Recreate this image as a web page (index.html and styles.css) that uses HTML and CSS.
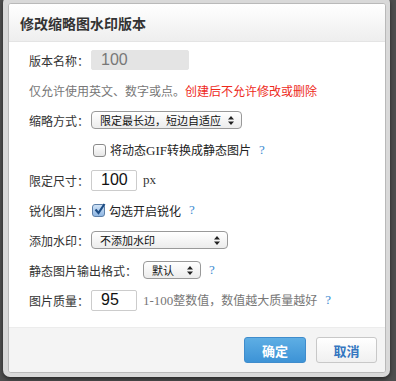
FILE: index.html
```html
<!DOCTYPE html>
<html lang="zh-CN">
<head>
	<meta charset="UTF-8">
	<title>修改缩略图水印版本</title>
	<link rel="stylesheet" href="styles.css">
</head>
<body>
	<div class="frame">
		<div class="modal">
			<div class="modal-header">修改缩略图水印版本</div>
			<div class="modal-body">
				<div class="row">
					<span class="label">版本名称：</span>
					<span class="input readonly">100</span>
				</div>
				<div class="row help">
					<span>仅允许使用英文、数字或点。</span><span class="warn">创建后不允许修改或删除</span>
				</div>
				<div class="row">
					<span class="label">缩略方式：</span>
					<span class="select w-method">限定最长边，短边自适应<svg class="arrows" width="6" height="9" viewBox="0 0 6 9"><path d="M3 0L6 3.5H0Z M3 9L0 5.5H6Z" fill="#222"/></svg></span>
				</div>
				<div class="row indent">
					<span class="check"></span>
					<span class="check-text">将动态<span class="latin">GIF</span>转换成静态图片</span>
					<span class="q">?</span>
				</div>
				<div class="row">
					<span class="label">限定尺寸：</span>
					<span class="input small">100</span>
					<span class="unit">px</span>
				</div>
				<div class="row">
					<span class="label">锐化图片：</span>
					<span class="check checked"><svg width="13" height="13" viewBox="0 0 13 13"><path d="M2.5 6.5L5.5 10L11.5 1" fill="none" stroke="#1d4d85" stroke-width="2.2"/></svg></span>
					<span class="check-text">勾选开启锐化</span>
					<span class="q">?</span>
				</div>
				<div class="row">
					<span class="label">添加水印：</span>
					<span class="select w-mark">不添加水印<svg class="arrows" width="6" height="9" viewBox="0 0 6 9"><path d="M3 0L6 3.5H0Z M3 9L0 5.5H6Z" fill="#222"/></svg></span>
				</div>
				<div class="row">
					<span class="label wide">静态图片输出格式：</span>
					<span class="select w-format">默认<svg class="arrows" width="6" height="9" viewBox="0 0 6 9"><path d="M3 0L6 3.5H0Z M3 9L0 5.5H6Z" fill="#222"/></svg></span>
					<span class="q">?</span>
				</div>
				<div class="row">
					<span class="label">图片质量：</span>
					<span class="input small">95</span>
					<span class="note"><span class="latin">1-100</span>整数值，数值越大质量越好</span>
					<span class="q">?</span>
				</div>
			</div>
			<div class="modal-footer">
				<button class="btn primary">确定</button>
				<button class="btn">取消</button>
			</div>
		</div>
	</div>
</body>
</html>
```
FILE: styles.css
```css
html,
body {
	margin: 0;
	padding: 0;
}

body {
	width: 396px;
	height: 381px;
	overflow: hidden;
	background: #4e4e4e;
	font-family: "Noto Sans CJK SC", "Liberation Sans", sans-serif;
	color: #333;
}

*,
*::before,
*::after {
	box-sizing: border-box;
}

.frame {
	margin: -4px 0 0 3px;
	width: 387px;
	height: 381px;
	padding: 7px 4px 4px 5px;
	background: #d9d9d9;
	border-radius: 7px;
	box-shadow: 0 2px 4px rgba(0, 0, 0, 0.5);
}

.modal {
	height: 100%;
	display: flex;
	flex-direction: column;
	border: 1px solid #b9b9b9;
	border-radius: 3px;
	background: #fff;
	overflow: hidden;
}

.modal-header {
	height: 38px;
	padding-left: 11px;
	display: flex;
	align-items: center;
	font-size: 14px;
	font-weight: bold;
	background: linear-gradient(#fff, #eeeeee);
	border-bottom: 1px solid #e4e4e4;
}

.modal-body {
	flex: 1;
	padding: 3px 0 0 20px;
	font-size: 12px;
}

.row {
	height: 30px;
	display: flex;
	align-items: center;
}

.label {
	width: 62px;
	flex: none;
	white-space: nowrap;
}

.label.wide {
	width: 99px;
}

.indent {
	padding-left: 63px;
}

.help {
	color: #777;
}

.warn {
	color: #ee2a1c;
}

.latin {
	font-family: "Liberation Serif", serif;
	font-size: 13px;
}

.input {
	height: 21px;
	display: flex;
	align-items: center;
	padding-left: 9px;
	border: 1px solid #ccc;
	border-radius: 2px;
	font-family: "Liberation Sans", sans-serif;
	font-size: 16px;
	color: #111;
	background: #fff;
}

.input.readonly {
	width: 98px;
	height: 20px;
	border-color: #e4e4e4;
	background: #e4e4e4;
	color: #777;
}

.input.small {
	width: 46px;
}

.unit {
	margin-left: 6px;
	font-family: "Liberation Serif", serif;
	font-size: 13px;
}

.select {
	height: 18px;
	display: flex;
	align-items: center;
	justify-content: space-between;
	padding: 0 7px 0 8px;
	border: 1px solid #999;
	border-radius: 4px;
	background: linear-gradient(#fff, #ececec);
	font-size: 11px;
	color: #111;
	white-space: nowrap;
}

.w-method {
	width: 151px;
}

.w-mark {
	width: 137px;
}

.w-format {
	width: 58px;
	margin-left: 15px;
}

.check {
	width: 13px;
	height: 13px;
	flex: none;
	margin: 0 4px 0 1px;
	border: 1px solid #8a8a8a;
	border-radius: 3px;
	background: linear-gradient(#fff, #e6e6e6);
	position: relative;
}

.check.checked {
	background: linear-gradient(#cfe2f6, #8fb6e2);
	border-color: #5c7fa8;
}

.check.checked svg {
	position: absolute;
	left: 0;
	top: -2px;
}

.check-text {
	font-size: 12px;
	color: #222;
}

.q {
	margin-left: 8px;
	color: #3b8bd1;
	font-family: "Liberation Serif", serif;
	font-size: 13px;
}

.note {
	margin-left: 6px;
	color: #777;
}

.modal-footer {
	height: 45px;
	display: flex;
	align-items: center;
	justify-content: flex-end;
	gap: 10px;
	padding-right: 8px;
	background: #f4f4f4;
	border-top: 1px solid #ececec;
}

.btn {
	width: 61px;
	height: 26px;
	padding: 0;
	border: 1px solid #c8c8c8;
	border-radius: 3px;
	background: linear-gradient(#fff, #f0f0f0);
	font-family: "Noto Sans CJK SC", sans-serif;
	font-size: 13px;
	font-weight: bold;
	color: #3476c0;
	cursor: pointer;
}

.btn.primary {
	width: 62px;
	border-color: #3f8ccc;
	background: linear-gradient(#5eaee4, #3d93d6);
	color: #fff;
}
```
